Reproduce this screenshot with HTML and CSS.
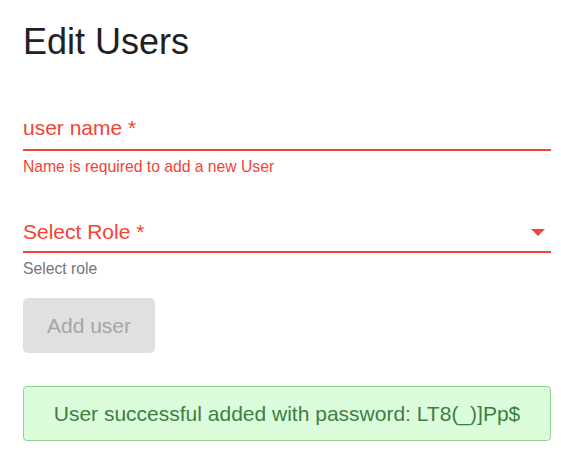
FILE: index.html
```html
<!DOCTYPE html>
<html>
<head>
<meta charset="utf-8">
<link rel="stylesheet" href="styles.css">
</head>
<body>
<div class="page">
  <h1 class="title">Edit Users</h1>
  <div class="field field-name">
    <span class="label">user name *</span>
  </div>
  <div class="helper error">Name is required to add a new User</div>
  <div class="field field-role">
    <span class="label">Select Role *</span>
    <span class="arrow"></span>
  </div>
  <div class="helper">Select role</div>
  <button class="btn" disabled>Add user</button>
  <div class="alert">User successful added with password: LT8(_)]Pp$</div>
</div>
</body>
</html>
```
FILE: styles.css
```css
html, body {
  margin: 0;
  padding: 0;
  background: #ffffff;
}
.page {
  padding: 0 10px 0 23px;
  font-family: "Liberation Sans", Arial, sans-serif;
  display: flex;
  flex-direction: column;
  align-items: stretch;
}
.title {
  margin: 22px 0 0;
  font-size: 36px;
  line-height: 40px;
  font-weight: 400;
  color: #212121;
}
.field {
  display: flex;
  align-items: center;
  justify-content: space-between;
  border-bottom: 2px solid #f44336;
}
.field-name {
  margin-top: 54px;
  padding-bottom: 9px;
}
.field-role {
  margin-top: 44px;
  padding-bottom: 7px;
}
.label {
  font-size: 21px;
  line-height: 24px;
  color: #f44336;
}
.arrow {
  width: 0;
  height: 0;
  border-left: 7px solid transparent;
  border-right: 7px solid transparent;
  border-top: 7px solid #f44336;
  margin-right: 6px;
}
.helper {
  margin-top: 7px;
  font-size: 15.7px;
  line-height: 18px;
  color: #757575;
}
.helper.error {
  color: #f44336;
}
.btn {
  align-self: flex-start;
  margin-top: 20px;
  height: 55px;
  width: 132px;
  padding: 0;
  border: none;
  border-radius: 5px;
  background: #e0e0e0;
  color: #a6a6a6;
  font-family: "Liberation Sans", Arial, sans-serif;
  font-size: 21px;
}
.alert {
  margin-top: 33px;
  height: 55px;
  box-sizing: border-box;
  border: 1px solid #8fd48f;
  border-radius: 4px;
  background: #dcfddc;
  color: #3e7e42;
  font-size: 21px;
  display: flex;
  align-items: center;
  justify-content: center;
}
```
